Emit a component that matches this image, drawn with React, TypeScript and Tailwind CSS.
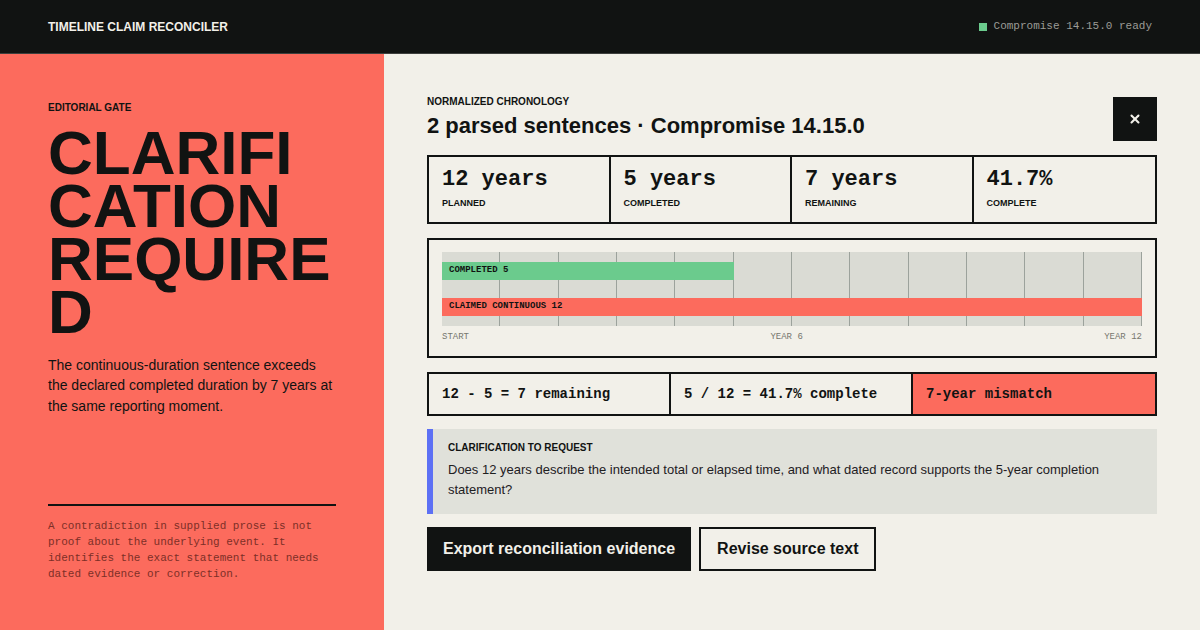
import React from "react";
import { X } from "lucide-react";

const sans = { fontFamily: '"Liberation Sans", Arial, sans-serif' };
const MONO = "font-['Liberation_Mono','Courier_New',monospace]";

export default function App() {
  const cells = Array.from({ length: 12 }, (_, i) => i);
  return (
    <div
      className="w-[1200px] h-[630px] flex flex-col bg-[#f2f0e9] text-[#111312] overflow-hidden font-['Liberation_Sans',Arial,sans-serif]"
      style={sans}
    >
      {/* Header */}
      <header className="h-[54px] shrink-0 bg-[#111312] border-b border-[#3d3f3d] flex items-center justify-between pl-[48px] pr-[48px]">
        <div className="text-[12px] font-bold text-[#f2f0e9] mt-[1px]">TIMELINE CLAIM RECONCILER</div>
        <div className="flex items-center gap-[7px]">
          <span className="w-[8px] h-[8px] bg-[#6bcb8d] inline-block" />
          <span className={`${MONO} text-[11px] text-[#9b9b96]`}>Compromise 14.15.0 ready</span>
        </div>
      </header>

      <div className="flex-1 flex min-h-0">
        {/* Left panel */}
        <aside className="w-[384px] shrink-0 bg-[#fc6b5d] px-[48px] pt-[48px] pb-[48px] flex flex-col">
          <div className="text-[10px] font-bold leading-[12px]">EDITORIAL GATE</div>
          <h1 className="mt-[12px] text-[62px] font-bold leading-[53px] [overflow-wrap:anywhere]">
            CLARIFICATION REQUIRED
          </h1>
          <p className="mt-[17px] text-[14px] leading-[20.4px] pr-[2px]">
            The continuous-duration sentence exceeds the declared completed duration by 7 years at the same reporting moment.
          </p>
          <div className="mt-auto border-t-2 border-[#111312] pt-[12px]">
            <p className={`${MONO} text-[11px] leading-[16px] text-[#7d2f27]`}>
              A contradiction in supplied prose is not proof about the underlying event. It identifies the exact statement that needs dated evidence or correction.
            </p>
          </div>
        </aside>

        {/* Main panel */}
        <main className="flex-1 px-[43px] pt-[43px] flex flex-col gap-[14px]">
          <div className="flex items-start justify-between h-[44px]">
            <div>
              <div className="text-[10px] font-bold leading-[12px] mt-[-1px]">NORMALIZED CHRONOLOGY</div>
              <div className="text-[22px] font-bold leading-[28px] mt-[4px]">2 parsed sentences · Compromise 14.15.0</div>
            </div>
            <button className="w-[44px] h-[44px] bg-[#111312] flex items-center justify-center">
              <X size={14} strokeWidth={3.5} color="#f2f0e9" />
            </button>
          </div>

          {/* Stats */}
          <div className="grid grid-cols-4 border-2 border-[#111312] h-[69px]">
            {[
              ["12 years", "PLANNED"],
              ["5 years", "COMPLETED"],
              ["7 years", "REMAINING"],
              ["41.7%", "COMPLETE"],
            ].map(([v, l], i) => (
              <div key={l} className={`pl-[13px] pt-[10px] ${i < 3 ? "border-r-2 border-[#111312]" : ""}`}>
                <div className={`${MONO} text-[22px] font-bold leading-[25px]`}>{v}</div>
                <div className="text-[9px] font-bold leading-[12px] mt-[5px]">{l}</div>
              </div>
            ))}
          </div>

          {/* Chart */}
          <div className="border-2 border-[#111312] h-[120px] px-[13px] pt-[12px]">
            <div className="relative h-[74px] bg-[#dadbd4] pt-[10px] flex flex-col gap-[18px]">
              <div className="absolute inset-0 flex">
                {cells.map((c) => (
                  <div key={c} className="flex-1 border-r border-[#9ca29c]" />
                ))}
              </div>
              <div className="relative h-[18px] w-[41.667%] bg-[#6bcb8d] flex items-center pl-[7px]">
                <span className={`${MONO} text-[9px] font-bold text-[#111312]`}>COMPLETED 5</span>
              </div>
              <div className="relative h-[18px] w-full bg-[#fc6b5d] flex items-center pl-[7px]">
                <span className={`${MONO} text-[9px] font-bold text-[#111312]`}>CLAIMED CONTINUOUS 12</span>
              </div>
            </div>
            <div className={`flex justify-between mt-[5px] ${MONO} text-[9px] leading-[12px] text-[#77776f]`}>
              <span>START</span>
              <span>YEAR 6</span>
              <span>YEAR 12</span>
            </div>
          </div>

          {/* Equations */}
          <div className={`grid grid-cols-3 border-2 border-[#111312] h-[44px] ${MONO} text-[14px] font-bold`}>
            <div className="border-r-2 border-[#111312] flex items-center pl-[13px]">12 - 5 = 7 remaining</div>
            <div className="border-r-2 border-[#111312] flex items-center pl-[13px]">5 / 12 = 41.7% complete</div>
            <div className="bg-[#fc6b5d] flex items-center pl-[13px]">7-year mismatch</div>
          </div>

          {/* Clarification */}
          <div className="-mt-[1px] bg-[#e0e1da] border-l-[6px] border-[#5d70f4] pl-[15px] pr-[20px] pt-[13px] pb-[14px]">
            <div className="text-[10px] font-bold leading-[12px]">CLARIFICATION TO REQUEST</div>
            <p className="mt-[6px] text-[13px] leading-[20px] text-[#1e201f]">
              Does 12 years describe the intended total or elapsed time, and what dated record supports the 5-year completion statement?
            </p>
          </div>

          {/* Buttons */}
          <div className="flex gap-[8px] -mt-[1px]">
            <button className="h-[44px] px-[16px] bg-[#111312] text-[#f2f0e9] text-[16px] font-bold">
              Export reconciliation evidence
            </button>
            <button className="h-[44px] px-[16px] border-2 border-[#111312] text-[#111312] text-[16px] font-bold">
              Revise source text
            </button>
          </div>
        </main>
      </div>
    </div>
  );
}
